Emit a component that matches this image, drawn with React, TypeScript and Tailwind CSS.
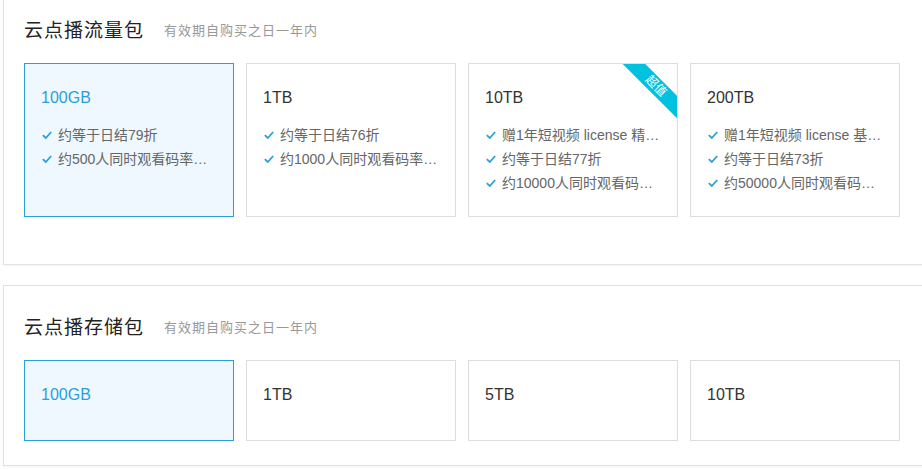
const font = { fontFamily: '"Liberation Sans", "Noto Sans CJK SC", sans-serif' };

type Pack = { name: string; features?: string[]; tag?: string };

const traffic: Pack[] = [
  { name: "100GB", features: ["约等于日结79折", "约500人同时观看码率为1Mbps的视频"] },
  { name: "1TB", features: ["约等于日结76折", "约1000人同时观看码率为1Mbps的视频"] },
  {
    name: "10TB",
    tag: "超值",
    features: ["赠1年短视频 license 精简版", "约等于日结77折", "约10000人同时观看码率为1Mbps的视频"],
  },
  {
    name: "200TB",
    features: ["赠1年短视频 license 基础版", "约等于日结73折", "约50000人同时观看码率为1Mbps的视频"],
  },
];

const storage: Pack[] = [{ name: "100GB" }, { name: "1TB" }, { name: "5TB" }, { name: "10TB" }];

function Check() {
  return (
    <svg width="10" height="8" viewBox="0 0 10 8" className="shrink-0">
      <path d="M0.8 4.2 L3.8 7 L9.2 1" fill="none" stroke="#2a9fd8" strokeWidth="1.8" />
    </svg>
  );
}

function Card({ pack, selected, tall }: { pack: Pack; selected: boolean; tall: boolean }) {
  return (
    <div
      className={`relative overflow-hidden w-[210px] shrink-0 border px-4 pt-[24px] ${
        tall ? "h-[154px]" : "h-[81px]"
      } ${selected ? "border-[#2a9fd8] bg-[#eff8ff]" : "border-[#dddddd] bg-white"}`}
    >
      <div className={`text-[16px] leading-[20px] ${selected ? "text-[#2a9fd8]" : "text-[#333333]"}`}>
        {pack.name}
      </div>
      {pack.features && (
        <ul className="mt-[15px]">
          {pack.features.map((f) => (
            <li key={f} className="flex items-center gap-[6px] h-[24px] pl-[1px] text-[14px] text-[#666666]">
              <Check />
              <span className="truncate">{f}</span>
            </li>
          ))}
        </ul>
      )}
      {pack.tag && (
        <div className="absolute -right-[19px] top-[14px] w-[80px] h-[16px] rotate-45 bg-[#00c1de] text-white text-[12px] leading-[16px] text-center">
          {pack.tag}
        </div>
      )}
    </div>
  );
}

function Panel({ title, packs, tall, pb }: { title: string; packs: Pack[]; tall: boolean; pb: string }) {
  return (
    <section className={`bg-white border border-[#e3e3e3] shadow-[0_1px_3px_rgba(0,0,0,0.05)] pl-[20px] pt-[30px] ${pb}`}>
      <div className="flex items-center h-[24px]">
        <h2 className="text-[19px] tracking-[1px] text-[#222222] font-normal">{title}</h2>
        <span className="ml-[20px] text-[13px] tracking-[1px] text-[#999999]">有效期自购买之日一年内</span>
      </div>
      <div className="mt-[20px] flex gap-[12px]">
        {packs.map((p, i) => (
          <Card key={p.name} pack={p} selected={i === 0} tall={tall} />
        ))}
      </div>
    </section>
  );
}

export default function App() {
  return (
    <div className="h-[469px] overflow-hidden bg-white" style={font}>
      <div className="-mt-[12px] ml-[3px] w-[940px] flex flex-col gap-[20px]">
        <Panel title="云点播流量包" packs={traffic} tall pb="pb-[47px]" />
        <Panel title="云点播存储包" packs={storage} tall={false} pb="pb-[24px]" />
      </div>
    </div>
  );
}
